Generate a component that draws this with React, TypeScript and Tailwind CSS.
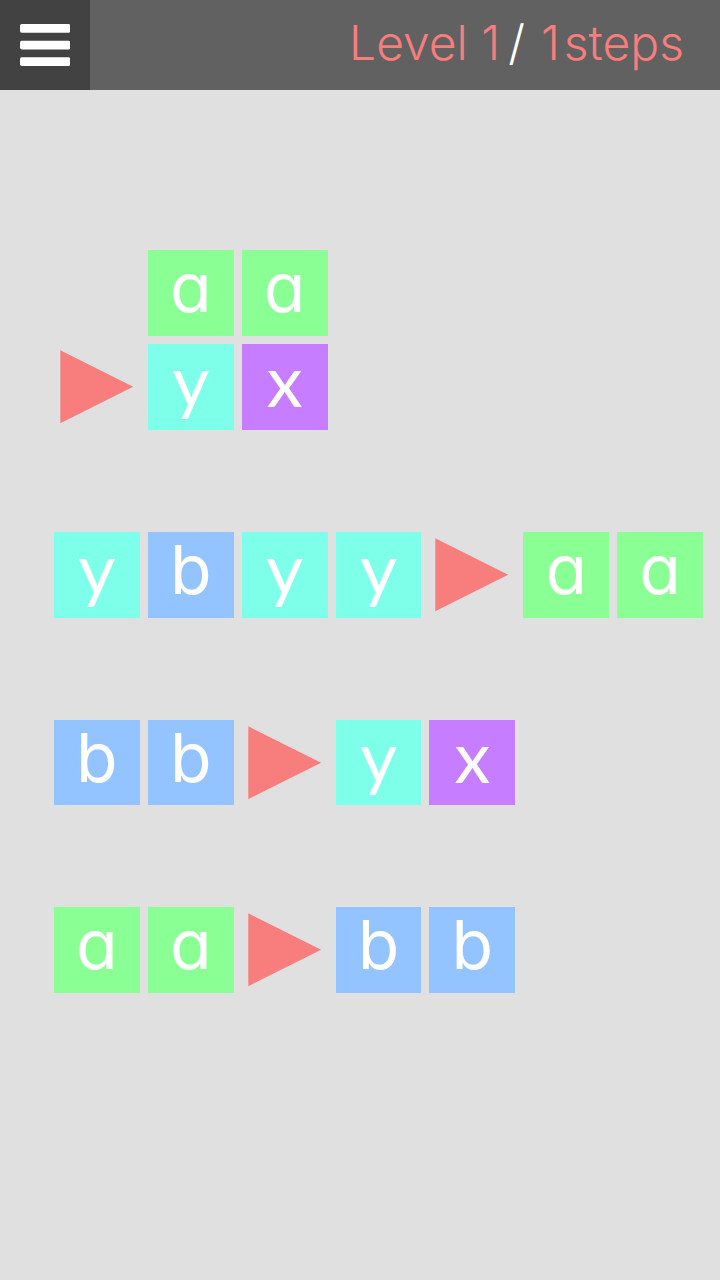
type Symbol = 'a' | 'b' | 'x' | 'y';
type Cell = Symbol | '>' | null;

const tileStyles: Record<Symbol, string> = {
  a: 'bg-[#8aff94] font-[Inter,sans-serif] text-[68px] pb-3',
  b: 'bg-[#94c4ff] font-[Inter,sans-serif] text-[68px] pb-3',
  x: 'bg-[#c77dff] font-[Lato,sans-serif] text-[72px] pb-4',
  y: 'bg-[#7dffe9] font-[Lato,sans-serif] text-[72px] pb-4',
};

const current: Cell[] = [null, 'a', 'a', null, null, null, null, '>', 'y', 'x'];

const rules: Cell[][] = [
  ['y', 'b', 'y', 'y', '>', 'a', 'a'],
  ['b', 'b', '>', 'y', 'x'],
  ['a', 'a', '>', 'b', 'b'],
];

function Arrow() {
  return (
    <svg viewBox="0 0 86 86" className="aspect-square w-full" aria-hidden="true">
      <path d="M6.3 6.3 L79.3 42.8 L6.3 79.3 Z" fill="#f87d7d" />
    </svg>
  );
}

function Tile({ symbol }: { symbol: Symbol }) {
  return (
    <div
      className={`flex aspect-square min-h-0 items-center justify-center leading-[60px] font-normal text-white ${tileStyles[symbol]}`}
    >
      <span className="[font-feature-settings:'cv11']">{symbol}</span>
    </div>
  );
}

function Board({ cells }: { cells: Cell[] }) {
  return (
    <div className="grid grid-cols-7 gap-2">
      {cells.map((cell, i) =>
        cell === null ? <div key={i} /> : cell === '>' ? <Arrow key={i} /> : <Tile key={i} symbol={cell} />
      )}
    </div>
  );
}

export default function App() {
  return (
    <div className="min-h-screen bg-[#e0e0e0]">
      <header className="flex h-[90px] items-center justify-between bg-[#616161]">
        <button type="button" aria-label="Menu" className="flex h-full w-[90px] items-center justify-center bg-[#424242]">
          <svg viewBox="0 0 50 42" className="h-[42px] w-[50px]" fill="#fff" aria-hidden="true">
            <rect x="0" y="0" width="50.3" height="8.7" rx="1.8" />
            <rect x="0" y="16.7" width="50.3" height="8.7" rx="1.8" />
            <rect x="0" y="33.3" width="50.3" height="8.7" rx="1.8" />
          </svg>
        </button>
        <h1 className="flex gap-2 pr-9 pb-1 font-[Inter,sans-serif] text-[48px] leading-none font-[350] whitespace-nowrap text-[#f87d7d]">
          <span>Level 1</span>
          <span className="pr-2 text-white">/</span>
          <span className="flex gap-1">
            <span>1</span> <span>steps</span>
          </span>
        </h1>
      </header>
      <main className="flex flex-col gap-[102px] pt-40 pr-[17px] pl-[54px]">
        <Board cells={current} />
        {rules.map((rule, i) => (
          <Board key={i} cells={rule} />
        ))}
      </main>
    </div>
  );
}
